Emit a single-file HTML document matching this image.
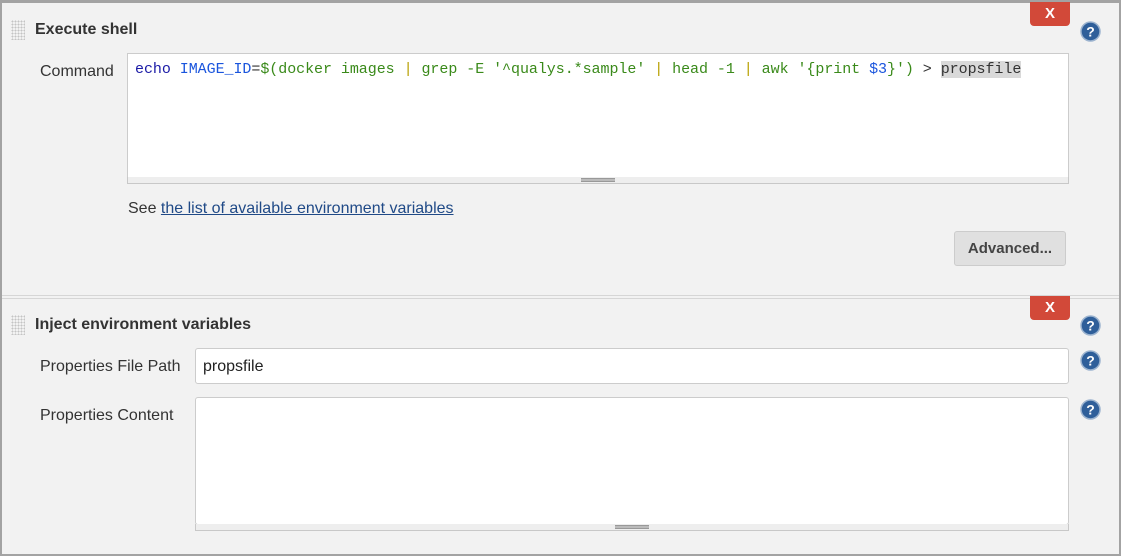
<!DOCTYPE html>
<html><head><meta charset="utf-8"><style>
*{box-sizing:border-box;margin:0;padding:0}
body{width:1121px;height:556px;background:#f2f2f2;font-family:"Liberation Sans",Arial,sans-serif;position:relative;overflow:hidden;color:#333}
.frame{position:absolute;left:0;top:0;width:1121px;height:556px;border:2px solid #a3a3a3;border-top-width:3px}
.a{position:absolute}
.grip{position:absolute;width:14px;height:20px;background-image:radial-gradient(#c4c4c4 0.8px,transparent 1px);background-size:3px 3px}
.title{font-weight:bold;font-size:16px;color:#333}
.lbl{font-size:16px;color:#333}
.x{position:absolute;width:40px;height:24px;background:#d24939;border-radius:0 0 4px 4px;color:#fff;font-weight:bold;font-size:15px;text-align:center;line-height:23px}
.ta{position:absolute;background:#fff;border:1px solid #ccc}
.bar{position:absolute;height:7px;background:#eee;border:1px solid #c8c8c8;border-top:none}
.bar i{position:absolute;left:50%;top:1px;width:34px;margin-left:-17px;height:4px;border-top:1px solid #999;border-bottom:1px solid #999;background:#bbb}
.code{font-family:"Liberation Mono",monospace;font-size:15px;letter-spacing:-0.05px;white-space:pre;color:#333}
.k{color:#1a1aa6}.v{color:#1a55dd}.s{color:#3a8a1a}.p{color:#b8a000}
</style></head><body>
<div class="frame"></div>
<div class="a" style="left:2px;right:2px;top:295px;height:1px;background:#d6d6d6"></div>
<div class="a" style="left:2px;right:2px;top:298px;height:1px;background:#d6d6d6"></div>

<div class="grip" style="left:11px;top:20px"></div>
<div class="a title" style="left:35px;top:21px">Execute shell</div>
<div class="x" style="left:1030px;top:2px">X</div>
<svg class="a" style="left:1080px;top:21px" width="21" height="21" viewBox="0 0 21 21"><circle cx="10.5" cy="10.5" r="9.5" fill="#2f5f9a" stroke="#9bb3cf" stroke-width="1.5"/><text x="10.5" y="15.5" text-anchor="middle" font-family="Liberation Sans" font-weight="bold" font-size="14" fill="#fff">?</text></svg>
<div class="a lbl" style="left:40px;top:63px">Command</div>
<div class="ta" style="left:127px;top:53px;width:942px;height:125px"></div>
<div class="a code" style="left:135px;top:61px"><span class="k">echo</span> <span class="v">IMAGE_ID</span>=<span class="s">$(docker images </span><span class="p">|</span><span class="s"> grep -E '^qualys.*sample' </span><span class="p">|</span><span class="s"> head -1 </span><span class="p">|</span><span class="s"> awk '{print </span><span class="v">$3</span><span class="s">}')</span> &gt; <span style="background:#d9d9d9">propsfile</span></div>
<div class="bar" style="left:127px;top:177px;width:942px"><i></i></div>
<div class="a" style="left:128px;top:200px;font-size:16px;color:#333">See <span style="color:#204a87;text-decoration:underline">the list of available environment variables</span></div>
<div class="a" style="left:954px;top:231px;width:112px;height:35px;background:#e0e0e0;border:1px solid #ccc;border-radius:3px;font-weight:bold;font-size:15px;color:#444;text-align:center;line-height:33px">Advanced...</div>

<div class="grip" style="left:11px;top:315px"></div>
<div class="a title" style="left:35px;top:316px">Inject environment variables</div>
<div class="x" style="left:1030px;top:296px">X</div>
<svg class="a" style="left:1080px;top:315px" width="21" height="21" viewBox="0 0 21 21"><circle cx="10.5" cy="10.5" r="9.5" fill="#2f5f9a" stroke="#9bb3cf" stroke-width="1.5"/><text x="10.5" y="15.5" text-anchor="middle" font-family="Liberation Sans" font-weight="bold" font-size="14" fill="#fff">?</text></svg>
<div class="a lbl" style="left:40px;top:358px">Properties File Path</div>
<div class="ta" style="left:195px;top:348px;width:874px;height:36px;border-radius:3px"></div>
<div class="a" style="left:203px;top:358px;font-size:16px;color:#222">propsfile</div>
<svg class="a" style="left:1080px;top:350px" width="21" height="21" viewBox="0 0 21 21"><circle cx="10.5" cy="10.5" r="9.5" fill="#2f5f9a" stroke="#9bb3cf" stroke-width="1.5"/><text x="10.5" y="15.5" text-anchor="middle" font-family="Liberation Sans" font-weight="bold" font-size="14" fill="#fff">?</text></svg>
<div class="a lbl" style="left:40px;top:407px">Properties Content</div>
<div class="ta" style="left:195px;top:397px;width:874px;height:128px;border-radius:3px"></div>
<div class="bar" style="left:195px;top:524px;width:874px"><i></i></div>
<svg class="a" style="left:1080px;top:399px" width="21" height="21" viewBox="0 0 21 21"><circle cx="10.5" cy="10.5" r="9.5" fill="#2f5f9a" stroke="#9bb3cf" stroke-width="1.5"/><text x="10.5" y="15.5" text-anchor="middle" font-family="Liberation Sans" font-weight="bold" font-size="14" fill="#fff">?</text></svg>
</body></html>
